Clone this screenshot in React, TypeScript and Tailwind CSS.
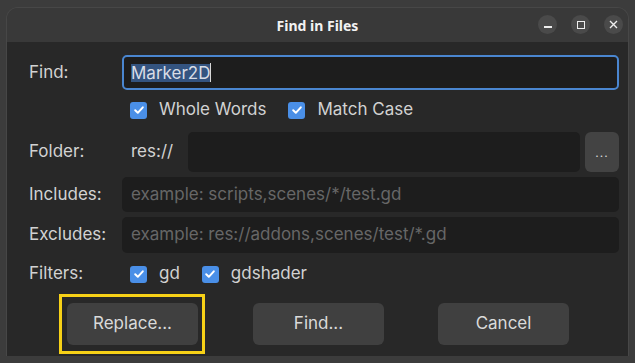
import { useState } from "react"

const FONT = { fontFamily: "Inter, 'Noto Sans', sans-serif" }

function Check({ checked = true }: { checked?: boolean }) {
  return (
    <span className="flex h-[17px] w-[17px] shrink-0 items-center justify-center rounded-[3px] bg-[#4a8fe7]">
      {checked && (
        <svg width="12" height="12" viewBox="0 0 12 12" fill="none">
          <path d="M2.2 6.3 L4.8 8.8 L9.8 3.3" stroke="#ffffff" strokeWidth="2" strokeLinecap="round" strokeLinejoin="round" />
        </svg>
      )}
    </span>
  )
}

function Option({ label, className = "" }: { label: string; className?: string }) {
  return (
    <div className={`flex items-center gap-[12px] ${className}`}>
      <Check />
      <span>{label}</span>
    </div>
  )
}

function TextField({ placeholder, className = "" }: { placeholder?: string; className?: string }) {
  return (
    <div className={`flex items-center rounded-[5px] bg-[#1d1d1d] pl-[9px] text-[#676767] ${className}`}>
      {placeholder}
    </div>
  )
}

export default function App() {
  const [query] = useState("Marker2D")

  return (
    <div className="flex h-[363px] w-[635px] flex-col bg-[#3c3c3c] px-[6px] pt-[7px]">
      <div className="flex h-[349px] flex-col overflow-hidden rounded-t-[12px] border-x border-t border-[#474747]">
        {/* title bar */}
        <div className="relative flex h-[34px] shrink-0 items-center justify-center bg-[#393939]">
          <span className="text-[14px] font-bold text-[#f2f2f2]" style={{ fontFamily: "'Noto Sans', sans-serif" }}>
            Find in Files
          </span>
          <div className="absolute right-[5px] top-[7px] flex gap-[14px]">
            <span className="flex h-[19px] w-[19px] items-center justify-center rounded-full bg-[#4a4a4a]">
              <span className="mt-[5px] h-[1.5px] w-[8px] bg-[#ededed]" />
            </span>
            <span className="flex h-[19px] w-[19px] items-center justify-center rounded-full bg-[#4a4a4a]">
              <span className="h-[8px] w-[8px] border-[1.5px] border-[#ededed]" />
            </span>
            <span className="flex h-[19px] w-[19px] items-center justify-center rounded-full bg-[#4a4a4a]">
              <svg width="9" height="9" viewBox="0 0 9 9">
                <path d="M1 1 L8 8 M8 1 L1 8" stroke="#ededed" strokeWidth="1.4" />
              </svg>
            </span>
          </div>
        </div>

        {/* body */}
        <div className="flex flex-1 flex-col bg-[#282828] pl-[22px] pr-[9px] text-[17px] text-[#d2d2d2]" style={FONT}>
          <div className="mt-[13px] flex h-[35px] items-center">
            <span className="w-[93px]">Find:</span>
            <div className="flex h-[35px] flex-1 items-center rounded-[5px] border-2 border-[#4a86d0] bg-[#1d1d1d] pl-[7px]">
              <span className="bg-[#345480] leading-[18px] text-[#d8dde6]">{query}</span>
              <span className="h-[19px] w-px bg-[#d8d8d8]" />
            </div>
          </div>

          <div className="mt-[10px] flex h-[20px] items-center pl-[101px]">
            <Option label="Whole Words" />
            <Option label="Match Case" className="ml-[22px]" />
          </div>

          <div className="mt-[12px] flex h-[40px] items-center">
            <span className="w-[102px]">Folder:</span>
            <span className="w-[57px]">res://</span>
            <TextField className="h-[40px] flex-1" />
            <span className="ml-[5px] flex h-[40px] w-[34px] items-end justify-center rounded-[6px] bg-[#434343] pb-[13px] text-[12px] leading-[12px] tracking-[1px] text-[#d8d8d8]">
              ...
            </span>
          </div>

          <div className="mt-[5px] flex h-[35px] items-center">
            <span className="w-[93px]">Includes:</span>
            <TextField className="h-[35px] flex-1" placeholder="example: scripts,scenes/*/test.gd" />
          </div>

          <div className="mt-[5px] flex h-[36px] items-center">
            <span className="w-[93px]">Excludes:</span>
            <TextField className="h-[36px] flex-1" placeholder="example: res://addons,scenes/test/*.gd" />
          </div>

          <div className="mt-[11px] flex h-[20px] items-center">
            <span className="w-[101px]">Filters:</span>
            <Option label="gd" />
            <Option label="gdshader" className="ml-[22px]" />
          </div>

          <div className="mt-[19px] flex h-[42px] items-center text-[#dadada]">
            <div className="relative ml-[38px]">
              <button className="flex h-[42px] w-[131px] items-center justify-center rounded-[6px] bg-[#404040]">
                Replace...
              </button>
              <span className="pointer-events-none absolute -bottom-[9px] -left-[8px] -right-[7px] -top-[9px] border-[3px] border-[#f7d117]" />
            </div>
            <button className="ml-[55px] flex h-[42px] w-[131px] items-center justify-center rounded-[6px] bg-[#404040]">
              Find...
            </button>
            <button className="ml-[54px] flex h-[42px] w-[131px] items-center justify-center rounded-[6px] bg-[#404040]">
              Cancel
            </button>
          </div>
        </div>
      </div>
    </div>
  )
}
